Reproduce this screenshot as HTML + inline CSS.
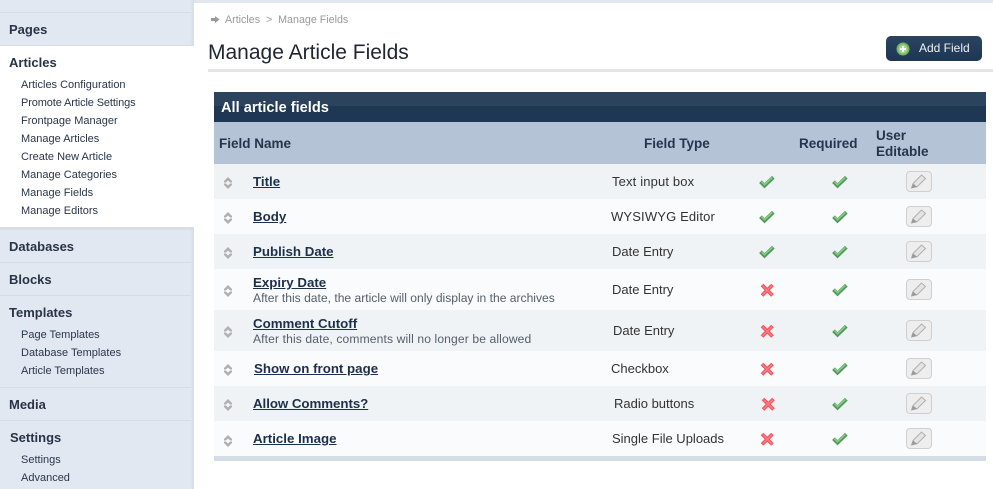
<!DOCTYPE html>
<html><head><meta charset="utf-8"><style>
html,body{margin:0;padding:0;background:#fff}
#p{position:relative;width:993px;height:489px;overflow:hidden;background:#fff;font-family:"Liberation Sans",Arial,sans-serif;color:#222b3a}
#p div,#p a,#p svg{position:absolute}
.t{white-space:nowrap}
.h{left:9px;font-size:13px;line-height:16px;font-weight:bold;color:#283445;white-space:nowrap}
.s{left:21px;font-size:11px;line-height:14px;color:#2a3648;white-space:nowrap}
.l{left:0;width:191px;height:1px;background:#d3dce9}
.r{left:214px;width:772px}
.n{font-size:13.3px;line-height:16px;font-weight:bold;color:#1c2f4b;text-decoration:underline;white-space:nowrap}
.d{font-size:12.1px;line-height:14px;color:#555e6a;left:253px;white-space:nowrap}
.y{font-size:13px;line-height:14px;color:#333;white-space:nowrap}
.th{font-size:13.5px;line-height:16px;font-weight:bold;color:#27344a;white-space:nowrap}
</style></head><body><div id="p">
<svg width="0" height="0" style="position:absolute"><defs>
<g id="ck"><path d="M1.5 6.7L5.5 10.7L14.3 2.3" fill="none" stroke="#50995a" stroke-width="3.8"/><path d="M2.5 6.7L5.5 9.7L13.3 2.4" fill="none" stroke="#86cb84" stroke-width="1.6"/></g>
<g id="xx"><path d="M2 2L12.5 12.5M12.5 2L2 12.5" stroke="#f4525c" stroke-width="3.7"/><path d="M2.5 2.5L12 12M12 2.5L2.5 12" stroke="#fb7e84" stroke-width="1.4"/></g>
<g id="so"><path d="M4 0L8 4V5.5H6L4 3.5L2 5.5H0V4ZM4 12L8 8V6.5H6L4 8.5L2 6.5H0V8Z" fill="#b0b0b0"/></g>
<g id="ed"><rect x=".5" y=".5" width="25" height="20" rx="3.5" fill="#eeeeee" stroke="#cfcfcf"/><path d="M5.5 17L7 12.5L15.5 4L19.5 7.5L11 15.8Z" fill="#e4e4e4" stroke="#aeaeae"/><path d="M5.5 17L7 12.5L11 15.8Z" fill="#999"/></g>
</defs></svg>

<div style="left:0;top:0;width:993px;height:3px;background:#e2e6ee"></div>
<div style="left:0;top:0;width:194px;height:489px;background:linear-gradient(90deg,#e2e8f2 190px,#d6dce6 194px)"></div>
<div class="l" style="top:12px"></div>
<div style="left:0;top:45px;width:194px;height:182px;background:#fff"></div>
<div style="left:0;top:45px;width:194px;height:1px;background:#d3dce9"></div>
<div style="left:0;top:227px;width:194px;height:3px;background:#d8dee7"></div>
<div class="l" style="top:262px"></div>
<div class="l" style="top:295px"></div>
<div class="l" style="top:387px"></div>
<div class="l" style="top:420px"></div>

<div class="h" style="top:22px">Pages</div>
<div class="h" style="top:55px">Articles</div>
<div class="s" style="top:78px">Articles Configuration</div>
<div class="s" style="top:96px;letter-spacing:-.12px">Promote Article Settings</div>
<div class="s" style="top:114px">Frontpage Manager</div>
<div class="s" style="top:132px">Manage Articles</div>
<div class="s" style="top:150px">Create New Article</div>
<div class="s" style="top:168px">Manage Categories</div>
<div class="s" style="top:186px">Manage Fields</div>
<div class="s" style="top:204px">Manage Editors</div>
<div class="h" style="top:239px">Databases</div>
<div class="h" style="top:272px">Blocks</div>
<div class="h" style="top:305px">Templates</div>
<div class="s" style="top:328px">Page Templates</div>
<div class="s" style="top:346px">Database Templates</div>
<div class="s" style="top:364px">Article Templates</div>
<div class="h" style="top:397px">Media</div>
<div class="h" style="top:430px;left:10px">Settings</div>
<div class="s" style="top:453px">Settings</div>
<div class="s" style="top:471px">Advanced</div>

<svg style="left:211px;top:16px" width="9" height="7"><path d="M0 2H4V0L8.5 3.5L4 7V5H0Z" fill="#999"/></svg>
<div class="t" style="left:225px;top:14px;font-size:10.7px;line-height:13px;color:#9a9a9a">Articles &nbsp;&gt;&nbsp; Manage Fields</div>
<div class="t" style="left:208px;top:41px;font-size:21px;line-height:24px;color:#1f2630">Manage Article Fields</div>
<div style="left:208px;top:69px;width:785px;height:3px;background:#e4e4e4"></div>

<div style="left:886px;top:36px;width:96px;height:25px;border-radius:5px;background:linear-gradient(#2b4460,#1d3654)"></div>
<svg style="left:896px;top:42px" width="14" height="14"><circle cx="7" cy="7" r="6.5" fill="#72b561"/><circle cx="7" cy="7" r="4.6" fill="#a5d58d"/><path d="M7 4V10M4 7H10" stroke="#fff" stroke-width="1.8"/></svg>
<div class="t" style="left:919px;top:41px;font-size:12px;line-height:15px;color:#eef2f7">Add Field</div>

<div class="r" style="top:92px;height:14px;background:#2c435d"></div>
<div class="r" style="top:106px;height:16px;background:#1e3853"></div>
<div class="t" style="left:221px;top:100px;font-size:14.6px;line-height:16px;font-weight:bold;color:#fff">All article fields</div>
<div class="r" style="top:122px;height:42px;background:#b4c3d6"></div>
<div class="th" style="left:219px;top:136px">Field Name</div>
<div class="th" style="left:644px;top:136px">Field Type</div>
<div class="th" style="left:799px;top:136px">Required</div>
<div class="th" style="left:876px;top:128px">User</div>
<div class="th" style="left:876px;top:144px">Editable</div>

<div class="r" style="top:164px;height:35px;background:#f0f3f6"></div>
<div class="r" style="top:199px;height:35px;background:#fafbfd"></div>
<div class="r" style="top:234px;height:35px;background:#f0f3f6"></div>
<div class="r" style="top:269px;height:41px;background:#fafbfd"></div>
<div class="r" style="top:310px;height:41px;background:#f0f3f6"></div>
<div class="r" style="top:351px;height:35px;background:#fafbfd"></div>
<div class="r" style="top:386px;height:35px;background:#f0f3f6"></div>
<div class="r" style="top:421px;height:35px;background:#fafbfd"></div>
<div class="r" style="top:456px;height:5px;background:#d4dde5"></div>

<div class="n" style="left:253px;top:174px">Title</div>
<div class="n" style="left:253px;top:209px">Body</div>
<div class="n" style="left:253px;top:244px">Publish Date</div>
<div class="n" style="left:253px;top:275px">Expiry Date</div>
<div class="d" style="top:291px">After this date, the article will only display in the archives</div>
<div class="n" style="left:253px;top:316px">Comment Cutoff</div>
<div class="d" style="top:332px;letter-spacing:.12px">After this date, comments will no longer be allowed</div>
<div class="n" style="left:254px;top:361px">Show on front page</div>
<div class="n" style="left:253px;top:396px;letter-spacing:-.05px">Allow Comments?</div>
<div class="n" style="left:253px;top:431px">Article Image</div>

<div class="y" style="left:612px;top:175px;letter-spacing:.15px">Text input box</div>
<div class="y" style="left:611px;top:210px;letter-spacing:.15px">WYSIWYG Editor</div>
<div class="y" style="left:612px;top:245px">Date Entry</div>
<div class="y" style="left:612px;top:283px">Date Entry</div>
<div class="y" style="left:613px;top:324px">Date Entry</div>
<div class="y" style="left:611px;top:362px">Checkbox</div>
<div class="y" style="left:614px;top:397px">Radio buttons</div>
<div class="y" style="left:612px;top:432px">Single File Uploads</div>

<svg style="left:224px;top:177px" width="9" height="12"><use href="#so"/></svg>
<svg style="left:224px;top:212px" width="9" height="12"><use href="#so"/></svg>
<svg style="left:224px;top:247px" width="9" height="12"><use href="#so"/></svg>
<svg style="left:224px;top:285px" width="9" height="12"><use href="#so"/></svg>
<svg style="left:224px;top:326px" width="9" height="12"><use href="#so"/></svg>
<svg style="left:224px;top:364px" width="9" height="12"><use href="#so"/></svg>
<svg style="left:224px;top:399px" width="9" height="12"><use href="#so"/></svg>
<svg style="left:224px;top:435px" width="9" height="12"><use href="#so"/></svg>

<svg style="left:759px;top:175px" width="16" height="15"><use href="#ck"/></svg>
<svg style="left:759px;top:210px" width="16" height="15"><use href="#ck"/></svg>
<svg style="left:759px;top:245px" width="16" height="15"><use href="#ck"/></svg>
<svg style="left:760px;top:283px" width="15" height="15"><use href="#xx"/></svg>
<svg style="left:760px;top:324px" width="15" height="15"><use href="#xx"/></svg>
<svg style="left:760px;top:362px" width="15" height="15"><use href="#xx"/></svg>
<svg style="left:761px;top:397px" width="15" height="15"><use href="#xx"/></svg>
<svg style="left:760px;top:432px" width="15" height="15"><use href="#xx"/></svg>

<svg style="left:832px;top:175px" width="16" height="15"><use href="#ck"/></svg>
<svg style="left:832px;top:210px" width="16" height="15"><use href="#ck"/></svg>
<svg style="left:832px;top:245px" width="16" height="15"><use href="#ck"/></svg>
<svg style="left:832px;top:283px" width="16" height="15"><use href="#ck"/></svg>
<svg style="left:832px;top:324px" width="16" height="15"><use href="#ck"/></svg>
<svg style="left:832px;top:362px" width="16" height="15"><use href="#ck"/></svg>
<svg style="left:832px;top:397px" width="16" height="15"><use href="#ck"/></svg>
<svg style="left:832px;top:432px" width="16" height="15"><use href="#ck"/></svg>

<svg style="left:906px;top:171px" width="26" height="21"><use href="#ed"/></svg>
<svg style="left:906px;top:206px" width="26" height="21"><use href="#ed"/></svg>
<svg style="left:906px;top:241px" width="26" height="21"><use href="#ed"/></svg>
<svg style="left:906px;top:279px" width="26" height="21"><use href="#ed"/></svg>
<svg style="left:906px;top:320px" width="26" height="21"><use href="#ed"/></svg>
<svg style="left:906px;top:358px" width="26" height="21"><use href="#ed"/></svg>
<svg style="left:906px;top:393px" width="26" height="21"><use href="#ed"/></svg>
<svg style="left:906px;top:428px" width="26" height="21"><use href="#ed"/></svg>
</div></body></html>
